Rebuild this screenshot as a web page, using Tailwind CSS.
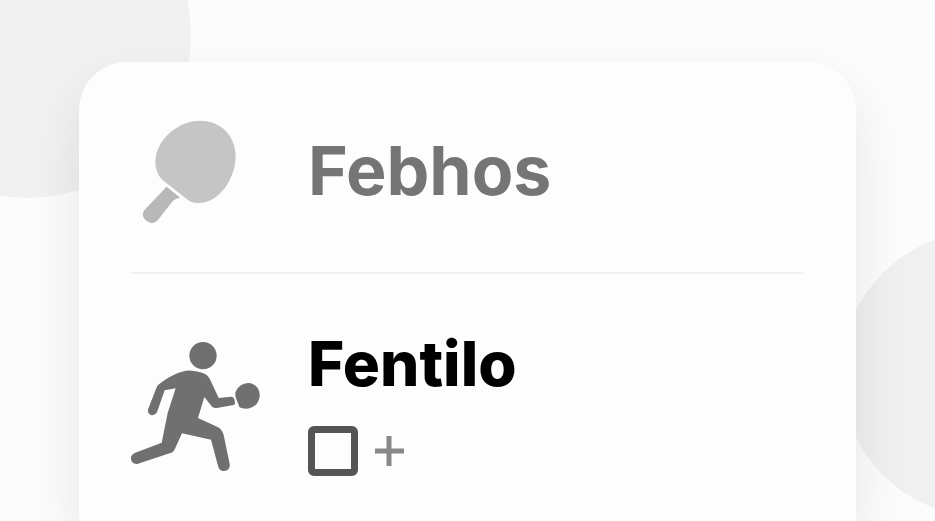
<!DOCTYPE html>
<html lang="en">
  <head>
    <meta charset="UTF-8" />
    <title>Febhos</title>
    <meta name="viewport" content="width=device-width, initial-scale=1.0" />
    <script src="https://cdn.jsdelivr.net/npm/@tailwindcss/browser@4"></script>
  </head>
  <body
    class="relative flex h-screen flex-col overflow-hidden bg-[#fcfcfc] px-[79px] pt-[62px] font-['Inter','Liberation_Sans',sans-serif]"
  >
    <!-- Background circles -->
    <svg class="absolute top-0 left-0 size-[200px]" viewBox="0 0 200 200">
      <circle cx="28" cy="35" r="163" fill="#f1f1f1" />
    </svg>
    <svg
      class="absolute top-[224px] right-0 h-[300px] w-[100px]"
      viewBox="0 0 100 300"
    >
      <circle cx="149" cy="150" r="143" fill="#f0f0f0" />
    </svg>

    <!-- Card -->
    <main
      class="relative flex-1 rounded-t-[48px] bg-[#fdfdfd] px-[52px] shadow-[0_24px_56px_rgba(0,0,0,0.09)]"
    >
      <section
        class="flex items-center border-b-2 border-[#f1f1f1] pt-[58px] pb-12"
      >
        <div class="w-[177px] shrink-0">
          <svg class="h-[104px] w-[129px]" viewBox="33 45 387 312">
            <path
              fill="#c5c5c5"
              d="M240 47C304 47 347 94 347 153C347 222 296 294 236 294C218 294 205 288 196 279L127 224C113 211 106 191 106 168C109 104 173 47 240 47Z"
            />
            <path
              fill="#b8b8b8"
              d="M140 245L181 278C170 279 163 283 156 291L116 342C107 355 93 357 82 349C68 340 65 326 74 314Z"
            />
          </svg>
        </div>
        <h2 class="pb-1 text-[68px] leading-[80px] font-bold text-[#757575]">
          Febhos
        </h2>
      </section>

      <section class="flex items-start pt-[68px]">
        <div class="w-[177px] shrink-0">
          <svg
            class="h-[130px] w-[129px] fill-[#707070]"
            viewBox="33 36 387 390"
          >
            <circle cx="249" cy="77" r="41" />
            <path
              d="M119 161C143 142 172 126 199 122C218 121 240 126 255 132C264 137 268 144 272 152L296 204L333 200C340 200 344 206 344 212L345 219C345 223 342 225 337 226L290 234C281 235 276 231 272 225L253 201L234 264L291 290C303 296 308 303 311 315L329 402C331 413 324 422 313 423C304 424 298 419 295 411L273 329L186 310L166 354C162 363 158 368 149 370L54 401C43 404 34 397 33 387C32 378 37 372 46 368L125 338L143 249L167 175L134 181L112 244C108 254 99 258 91 254C83 250 82 242 86 233L110 172C112 167 115 164 119 161Z"
            />
            <path
              d="M346 188C353 170 368 159 386 159C406 160 420 177 419 198C417 219 403 235 380 236C370 236 363 235 358 231C354 215 344 204 346 188Z"
            />
          </svg>
        </div>
        <div>
          <h2 class="text-[62px] leading-[44px] font-extrabold text-black">
            <label for="fentilo">Fentilo</label>
          </h2>
          <div class="mt-10 flex items-center gap-4">
            <input
              id="fentilo"
              type="checkbox"
              class="size-[50px] appearance-none rounded-md border-7 border-[#555] bg-[#fdfdfd]"
            />
            <button type="button" aria-label="Add">
              <svg class="size-8" viewBox="0 0 32 32">
                <path
                  stroke="#888"
                  stroke-width="5"
                  d="M1 16H30M15 1V31"
                />
              </svg>
            </button>
          </div>
        </div>
      </section>
    </main>
  </body>
</html>
